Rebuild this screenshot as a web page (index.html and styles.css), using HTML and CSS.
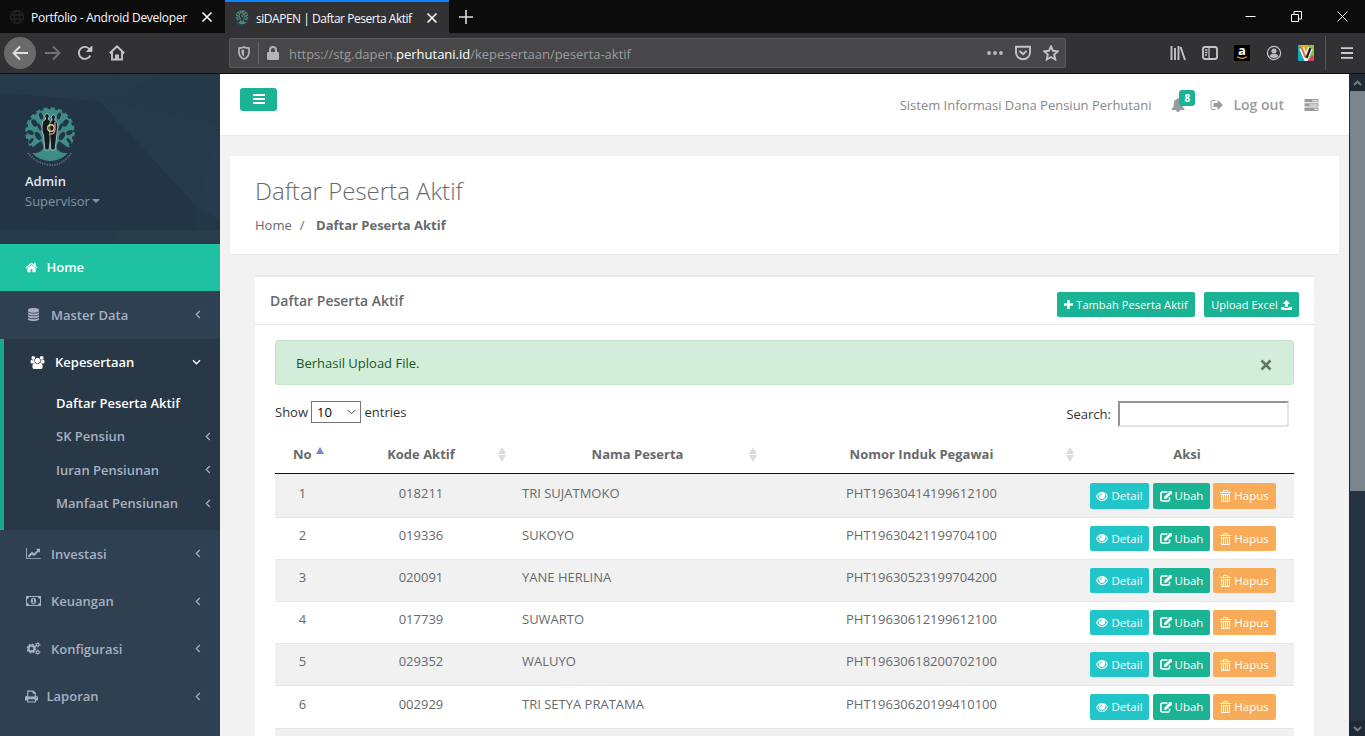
FILE: index.html
```html
<!DOCTYPE html>
<html lang="id">
<head>
<meta charset="utf-8">
<title>siDAPEN | Daftar Peserta Aktif</title>
<link rel="stylesheet" href="styles.css">
</head>
<body>
<svg class="sprite" width="0" height="0">
  <defs>
    <mask id="leaves" maskUnits="userSpaceOnUse" x="0" y="0" width="50" height="60">
      <circle cx="25" cy="25" r="23" fill="#fff"/>
      <circle cx="25" cy="25" r="23.500" fill="none" stroke="#fff" stroke-width="2.500" stroke-dasharray="4.200 3.183"/>
      <g fill="#000">
        <ellipse cx="9.500" cy="16" rx="2.600" ry="4" transform="rotate(-35 9.500 16)"/>
        <ellipse cx="40.500" cy="16" rx="2.600" ry="4" transform="rotate(35 40.500 16)"/>
        <ellipse cx="16" cy="9" rx="1.800" ry="3.500" transform="rotate(-15 16 9)"/>
        <ellipse cx="34" cy="9" rx="1.800" ry="3.500" transform="rotate(15 34 9)"/>
        <ellipse cx="13" cy="29" rx="2.500" ry="4.500" transform="rotate(-30 13 29)"/>
        <ellipse cx="37" cy="29" rx="2.500" ry="4.500" transform="rotate(30 37 29)"/>
        <ellipse cx="5.500" cy="25.500" rx="3.500" ry="2.200" transform="rotate(25 5.500 25.500)"/>
        <ellipse cx="44.500" cy="25.500" rx="3.500" ry="2.200" transform="rotate(-25 44.500 25.500)"/>
        <ellipse cx="14.500" cy="20" rx="1.500" ry="4" transform="rotate(-25 14.500 20)"/>
        <ellipse cx="35.500" cy="20" rx="1.500" ry="4" transform="rotate(25 35.500 20)"/>
        <ellipse cx="6" cy="34" rx="1.500" ry="3.500" transform="rotate(35 6 34)"/>
        <ellipse cx="44" cy="34" rx="1.500" ry="3.500" transform="rotate(-35 44 34)"/>
        <path d="M0 41 8 40 16 34Q20 40 17 44L10 50H0ZM50 41 42 40 34 34Q30 40 33 44L40 50H50Z"/>
      </g>
    </mask>
  </defs>
  <symbol id="home" viewBox="0 0 1792 1792"><path d="M1472 992v480q0 26-19 45t-45 19h-384v-384h-256v384h-384q-26 0-45-19t-19-45v-480q0-1 .5-3t.5-3l575-474 575 474q1 2 1 6zm223-69l-62 74q-8 9-21 11h-3q-13 0-21-7l-692-577-692 577q-12 8-24 7-13-2-21-11l-62-74q-8-10-7-23.5t11-21.5l719-599q32-26 76-26t76 26l244 204v-195q0-14 9-23t23-9h192q14 0 23 9t9 23v408l219 182q10 8 11 21.5t-7 23.5z"/></symbol>
  <symbol id="database" viewBox="0 0 1792 1792"><path d="M896 768q237 0 443-43t325-127v170q0 69-103 128t-280 93.5-385 34.5-385-34.5-280-93.5-103-128v-170q119 84 325 127t443 43zm0 768q237 0 443-43t325-127v170q0 69-103 128t-280 93.5-385 34.5-385-34.5-280-93.5-103-128v-170q119 84 325 127t443 43zm0-384q237 0 443-43t325-127v170q0 69-103 128t-280 93.5-385 34.5-385-34.5-280-93.5-103-128v-170q119 84 325 127t443 43zm0-1152q208 0 385 34.5t280 93.5 103 128v128q0 69-103 128t-280 93.5-385 34.5-385-34.5-280-93.5-103-128v-128q0-69 103-128t280-93.5 385-34.5z"/></symbol>
  <symbol id="users" viewBox="-64 0 1920 1792"><path d="M529 896q-162 5-265 128h-134q-82 0-138-40.5t-56-118.5q0-353 124-353 6 0 43.5 21t97.5 42.5 119 21.5q67 0 133-23-5 37-5 66 0 159 93 281zm1071 637q0 120-73 189.5t-194 69.5h-874q-121 0-194-69.5t-73-189.5q0-53 3.5-103.5t14-109 26.5-108.5 43-97.5 62-81 85.5-53.5 111.5-20q10 0 43 21.5t73 48 107 48 135 21.5 135-21.5 107-48 73-48 43-21.5q61 0 111.5 20t85.5 53.5 62 81 43 97.5 26.5 108.5 14 109 3.5 103.5zm-1024-1277q0 106-75 181t-181 75-181-75-75-181 75-181 181-75 181 75 75 181zm704 384q0 159-112.5 271.5t-271.5 112.5-271.5-112.5-112.5-271.5 112.5-271.5 271.5-112.5 271.5 112.5 112.5 271.5zm576 225q0 78-56 118.5t-138 40.5h-134q-103-123-265-128 93-122 93-281 0-29-5-66 66 23 133 23 59 0 119-21.5t97.5-42.5 43.5-21q124 0 124 353zm-128-609q0 106-75 181t-181 75-181-75-75-181 75-181 181-75 181 75 75 181z"/></symbol>
  <symbol id="chart" viewBox="-128 0 2048 1792"><path d="M1920 1536v128h-2048v-1536h128v1408h1920zm-128-1248v435q0 21-19.5 29.5t-35.5-7.5l-121-121-633 633q-10 10-23 10t-23-10l-233-233-416 416-192-192 585-585q10-10 23-10t23 10l233 233 464-464-121-121q-16-16-7.5-35.5t29.5-19.5h435q14 0 23 9t9 23z"/></symbol>
  <symbol id="money" viewBox="0 0 15 10"><path fill-rule="evenodd" d="M0 0H15V10H0ZM3 1Q3 3 1 3V7Q3 7 3 9H12Q12 7 14 7V3Q12 3 12 1Z"/><path fill-rule="evenodd" d="M7.5 1.8C9.3 1.8 10.2 3.2 10.2 5S9.3 8.2 7.5 8.2 4.8 6.800 4.800 5 5.700 1.800 7.500 1.800ZM6.300 3.700 6.700 4.200 7.100 4V6.300H6.300V7H8.800V6.300H8V3H7.300Z"/></symbol>
  <symbol id="cogs" viewBox="0 0 15 14"><g fill="none" stroke="currentColor"><circle cx="5.300" cy="7" r="3.100" stroke-width="2.200"/><circle cx="5.300" cy="7" r="4.600" stroke-width="1.400" stroke-dasharray="1.800 1.813"/><circle cx="12" cy="3" r="1.500" stroke-width="1.200"/><circle cx="12" cy="3" r="2.400" stroke-width="1" stroke-dasharray="1.200 1.310"/><circle cx="12" cy="11" r="1.500" stroke-width="1.200"/><circle cx="12" cy="11" r="2.400" stroke-width="1" stroke-dasharray="1.200 1.310"/></g></symbol>
  <symbol id="print" viewBox="0 0 12 12"><path fill-rule="evenodd" d="M2 .5H8L10 2.500V5.200Q12 5.300 12 7V9.700H10V11.500H2V9.700H0V7Q0 5.300 2 5.200ZM3 1.500V6H9V3.500H7V1.500ZM3 8.500V10.500H9V8.500ZM10.200 6.500V7.300H11V6.500Z"/></symbol>
  <symbol id="left" viewBox="0 0 6 9"><path d="M4.800 1 1.300 4.500 4.800 8" fill="none" stroke="currentColor" stroke-width="1.200"/></symbol>
  <symbol id="down" viewBox="0 0 9 6"><path d="M1 1.200 4.500 4.700 8 1.200" fill="none" stroke="currentColor" stroke-width="1.400"/></symbol>
  <symbol id="chev" viewBox="0 0 9 6"><path d="M.5 .8 4.500 4.800 8.500 .8" fill="none" stroke="currentColor" stroke-width="1"/></symbol>
  <symbol id="eye" viewBox="0 0 12 10"><path fill-rule="evenodd" d="M6 .5Q10 .5 12 5 10 9.500 6 9.500T0 5Q2 .5 6 .5ZM3.300 2.300Q1.800 3.500 1.200 5 2.800 8.400 6 8.400T10.800 5Q10.200 3.500 8.700 2.300 9.300 3.200 9.300 4.300A3.300 3.200 0 0 1 2.700 4.300Q2.700 3.200 3.300 2.300ZM6 1.900Q4 2 3.900 4.200H4.700Q4.800 2.800 6 2.700Z"/></symbol>
  <symbol id="edit" viewBox="0 0 12 11"><path d="M7.500 1H2.200Q.9 1 .9 2.300V8.700Q.9 10 2.200 10H8.200Q9.500 10 9.500 8.700V6.500" fill="none" stroke="currentColor" stroke-width="1.600"/><path d="M8.500 .2H12V3.400L10.800 3.200 6.300 7.700H4.200V5.700L8.900 1.200Z"/></symbol>
  <symbol id="trash" viewBox="0 0 11 12"><path fill="none" stroke="currentColor" d="M0 2.500H11M3.500 2.500V.5H7.500V2.500M1.500 4.500H9.500M1.500 4V11.500H9.500V4M3.500 4V11M5.500 4V11M7.500 4V11"/></symbol>
  <symbol id="bell" viewBox="0 0 1792 1792"><path d="M912 1696q0-16-16-16-59 0-101.500-42.500t-42.500-101.500q0-16-16-16t-16 16q0 73 51.500 124.500t124.500 51.500q16 0 16-16zm816-288q0 52-38 90t-90 38h-448q0 106-75 181t-181 75-181-75-75-181h-448q-52 0-90-38t-38-90q50-42 91-88t85-119.500 74.500-158.500 50-206 19.500-260q0-152 117-282.500t307-158.500q-8-19-8-39 0-40 28-68t68-28 68 28 28 68q0 20-8 39 190 28 307 158.500t117 282.500q0 139 19.500 260t50 206 74.500 158.500 85 119.500 91 88z"/></symbol>
  <symbol id="signout" viewBox="0 0 1792 1792"><path d="M704 1440q0 4 1 20t.5 26.500-3 23.500-10 19.500-20.500 6.500h-320q-119 0-203.500-84.500t-84.500-203.500v-704q0-119 84.500-203.500t203.500-84.500h320q13 0 22.500 9.500t9.500 22.500q0 4 1 20t.5 26.500-3 23.500-10 19.500-20.500 6.500h-320q-66 0-113 47t-47 113v704q0 66 47 113t113 47h312l11.500 1 11.500 3 8 5.500 7 9 2 13.500zm928-544q0 26-19 45l-544 544q-19 19-45 19t-45-19-19-45v-288h-448q-26 0-45-19t-19-45v-384q0-26 19-45t45-19h448v-288q0-26 19-45t45-19 45 19l544 544q19 19 19 45z"/></symbol>
  <symbol id="tasks" viewBox="0 0 14 12"><path fill-rule="evenodd" d="M0 0H14V3.300H0ZM8 1.200V2.200H13V1.200ZM0 4.300H14V7.600H0ZM5 5.500V6.500H13V5.500ZM0 8.600H14V12H0ZM10 9.800V10.800H13V9.800Z"/></symbol>
  <symbol id="plus" viewBox="0 0 9 9"><path d="M3.300 0H5.700V3.300H9V5.700H5.700V9H3.300V5.700H0V3.300H3.300Z"/></symbol>
  <symbol id="upload" viewBox="0 0 11 10"><path d="M5.500 0 9.200 3.800H7V7H4V3.800H1.800ZM0 7H3.300V8H7.700V7H11V10H0Z"/></symbol>
  <symbol id="x" viewBox="0 0 12 12"><path d="M1.500 1.500 10.500 10.500M10.500 1.500 1.500 10.500" fill="none" stroke="currentColor" stroke-width="1.700"/></symbol>
  <symbol id="emblem" viewBox="0 0 50 60">
    <rect width="50" height="60" fill="#3f8c87" mask="url(#leaves)"/>
    <path d="M19 40H31Q34 47 43 46Q35 54 25 54T7 46Q16 47 19 40Z" fill="#3f8c87"/>
    <g fill="#111b20" stroke="#d3dcda" stroke-width=".7"><path d="M20.500 11A2.200 2.500 0 1 1 23.500 11V12.500Q26 13.500 26 17V27L24 43H20L18.500 28Q16.500 25 17.200 17 17.300 13.500 20.500 12.500Z"/><path d="M27 12A2 2.400 0 1 1 29.800 12V13.500Q33 14.500 32.800 19L31.500 30 30 43H26L24.800 28V17Q24.800 14 27 13.500Z"/></g>
    <g fill="none" stroke-width="1.400"><circle cx="26" cy="21" r="3.300" stroke="#e0cf79"/><path d="M30 15V22Q30 28 24 27" stroke="#c98980"/></g>
    <path d="M3 46Q12 57 25 58T47 45" fill="none" stroke="#62717a" stroke-width="1.700" stroke-dasharray="1.300 1.200"/>
  </symbol>
</svg>

<header class="browser">
  <div class="tabs">
    <div class="tab tab-idle">
      <svg class="i16 globe" viewBox="0 0 16 16"><g fill="none" stroke="#242426" stroke-width="1.300"><circle cx="8" cy="8" r="6.500"/><ellipse cx="8" cy="8" rx="3" ry="6.500"/><path d="M1.500 6H14.500M1.500 10H14.500"/></g></svg>
      <span class="tab-title first">Portfolio - Android Developer</span>
      <svg class="close"><use href="#x"/></svg>
    </div>
    <div class="tab tab-on">
      <svg class="favicon"><use href="#emblem"/></svg>
      <span class="tab-title second">siDAPEN | Daftar Peserta Aktif</span>
      <svg class="close"><use href="#x"/></svg>
    </div>
    <svg class="newtab" viewBox="0 0 14 14"><path d="M7 0V14M0 7H14" stroke="#ddd" stroke-width="1.600"/></svg>
    <div class="window-buttons">
      <svg viewBox="0 0 11 11"><path d="M.5 5.500H10.500" /></svg>
      <svg viewBox="0 0 11 11"><path d="M.5 3.500H7.500V10.500H.5ZM3 3V.5H10.500V8H8"/></svg>
      <svg viewBox="0 0 11 11"><path d="M.5 .5 10.500 10.500M10.500 .5 .5 10.500"/></svg>
    </div>
  </div>
  <div class="toolbar">
    <div class="back"><svg class="i16" viewBox="0 0 16 16"><path d="M16 8H1.500M8 1.500 1.500 8 8 14.500"/></svg></div>
    <svg class="i16 fwd" viewBox="0 0 16 16"><path d="M0 8H14.500M8 1.500 14.500 8 8 14.500"/></svg>
    <svg class="i16 reload" viewBox="0 0 16 16"><path d="M13.300 10.500A6 6 0 1 1 12.500 4"/><path d="M15 1V6.500H9.500Z" fill="#ccc" stroke-width=".8"/></svg>
    <svg class="i16 house" viewBox="0 0 16 16"><path d="M.8 8.300 8 1.300 15.200 8.300M3 7V14.500H13V7M7 14V10.500H9V14" /></svg>
    <div class="urlbar">
      <svg class="shield" viewBox="0 0 12 14"><path d="M1 2.200Q4 1.900 6 .9 8 1.900 11 2.200V6Q11 11 6 13 1 11 1 6Z" fill="none" stroke="#b5b5b7" stroke-width="1.700"/><path d="M6 3.500V10.800Q3.500 9.500 3.500 6.500V4Z" fill="#b5b5b7"/></svg>
      <span class="divider"></span>
      <svg class="lock" viewBox="0 0 12 14"><path d="M3 7V4A3 3 0 0 1 9 4V7" fill="none" stroke="#b5b5b7" stroke-width="2"/><rect y="6" width="12" height="8" rx="1" fill="#b5b5b7"/></svg>
      <span class="url">https://stg.dapen.<b>perhutani.id</b>/kepesertaan/peserta-aktif</span>
      <span class="url-icons">
        <svg class="i16" viewBox="0 0 16 16"><g fill="#bbb" stroke="none"><circle cx="2" cy="8" r="1.900"/><circle cx="8" cy="8" r="1.900"/><circle cx="14" cy="8" r="1.900"/></g></svg>
        <svg class="i16" viewBox="0 0 16 16"><path d="M1 1.700H15V7.500A7 6.700 0 0 1 1 7.500ZM4.500 6 8 9.300 11.500 6"/></svg>
        <svg class="i16" viewBox="0 0 16 16"><path d="M8 1.300 10 5.800 14.900 6.300 11.200 9.600 12.300 14.500 8 12 3.700 14.500 4.800 9.600 1.100 6.300 6 5.800Z"/></svg>
      </span>
    </div>
    <div class="tools">
      <svg class="i16" viewBox="0 0 16 16"><path d="M1.500 1V15M5 3V15M8.500 1V15M10.500 2 15 15"/></svg>
      <svg class="i16" viewBox="0 0 16 16"><rect x="1" y="2" width="14" height="12" rx="2"/><path d="M7 2V14M3 5H5.500M3 7.500H5.500M3 10H5" stroke-width="1.300"/></svg>
      <span class="amazon">a<svg viewBox="0 0 16 16"><path d="M3 11.800Q8 15 13 11.800" stroke="#e99420" stroke-width="1.200" fill="none"/></svg></span>
      <svg class="i16" viewBox="0 0 16 16"><circle cx="8" cy="8" r="6.600" stroke-width="1.200"/><circle cx="8" cy="6" r="2.600" fill="#bbb" stroke="none"/><path d="M3.500 11.500Q4 9 6 9H10Q12 9 12.500 11.500 8 15 3.500 11.500Z" fill="#bbb" stroke="none"/></svg>
      <svg class="i16" viewBox="0 0 16 16"><g stroke="none"><rect width="16" height="16" rx="1" fill="#18a9bd"/><path d="M0 0H16V6H9Z" fill="#f3a61e"/><path d="M10 0H16V12L9 15Z" fill="#8fbf3f"/><path d="M10 16 14 10 16 12V16Z" fill="#df3b78"/></g><path d="M3.500 3 8 13 12.500 3" stroke="#fff" stroke-width="5"/><path d="M3.500 2.500 7.500 12.500" stroke="#ed6b25" stroke-width="2"/><path d="M8.500 13 12.500 3" stroke="#25202b" stroke-width="2.300"/></svg>
    </div>
    <span class="tool-line"></span>
    <svg class="menu" viewBox="0 0 12 12"><path d="M0 1.200H12M0 6H12M0 10.800H12" stroke="#ccc" stroke-width="1.800"/></svg>
  </div>
</header>

<div class="app">
  <nav class="sidebar">
    <div class="profile">
      <svg class="facets" viewBox="0 0 220 171" preserveAspectRatio="none"><rect width="220" height="171" fill="#243746"/><path d="M0 0H120L100 28 0 19Z" fill="#263a49"/><path d="M120 0H220V85L197 134 100 28Z" fill="#273a49"/><path d="M165 0 100 28 220 50V0Z" fill="#263948"/><path d="M220 50V147L197 134Z" fill="#283b4a"/><path d="M0 19 100 28 197 134 195 157H50L0 90Z" fill="#233544"/><path d="M0 90 50 157H0Z" fill="#243645"/><path d="M0 157H220V171H0Z" fill="#263a49"/><path d="M120 157H220V171H110Z" fill="#283c4a"/></svg>
      <svg class="logo"><use href="#emblem"/></svg>
      <strong>Admin</strong>
      <span class="role">Supervisor<i class="caret"></i></span>
    </div>
    <a class="nav home"><svg class="ic13"><use href="#home"/></svg><span>Home</span></a>
    <a class="nav wide"><svg class="ic17"><use href="#database"/></svg><span>Master Data</span><svg class="left"><use href="#left"/></svg></a>
    <div class="group">
      <a class="nav wide"><svg class="ic17"><use href="#users"/></svg><span>Kepesertaan</span><svg class="down"><use href="#down"/></svg></a>
      <div class="sub">
        <a class="on">Daftar Peserta Aktif</a>
        <a>SK Pensiun<svg class="left"><use href="#left"/></svg></a>
        <a>Iuran Pensiunan<svg class="left"><use href="#left"/></svg></a>
        <a>Manfaat Pensiunan<svg class="left"><use href="#left"/></svg></a>
      </div>
    </div>
    <a class="nav wide"><svg class="ic17"><use href="#chart"/></svg><span>Investasi</span><svg class="left"><use href="#left"/></svg></a>
    <a class="nav wide"><svg class="ic17 money"><use href="#money"/></svg><span>Keuangan</span><svg class="left"><use href="#left"/></svg></a>
    <a class="nav wide"><svg class="ic17"><use href="#cogs"/></svg><span>Konfigurasi</span><svg class="left"><use href="#left"/></svg></a>
    <a class="nav narrow"><svg class="ic13"><use href="#print"/></svg><span>Laporan</span><svg class="left"><use href="#left"/></svg></a>
  </nav>

  <main>
    <div class="topbar">
      <button class="burger"><i></i><i></i><i></i></button>
      <div class="topright">
        <span class="welcome">Sistem Informasi Dana Pensiun Perhutani</span>
        <span class="alerts"><svg><use href="#bell"/></svg><b>8</b></span>
        <a class="logout"><svg><use href="#signout"/></svg><span>Log out</span></a>
        <svg class="tasks"><use href="#tasks"/></svg>
      </div>
    </div>
    <section class="heading">
      <h1>Daftar Peserta Aktif</h1>
      <div class="crumbs"><span>Home</span><span class="slash">/</span><b>Daftar Peserta Aktif</b></div>
    </section>
    <section class="box">
      <div class="box-title">
        <h2>Daftar Peserta Aktif</h2>
        <div class="box-tools">
          <a class="btn tambah"><svg class="plus"><use href="#plus"/></svg><span>Tambah Peserta Aktif</span></a>
          <a class="btn upload"><span>Upload Excel</span><svg class="up"><use href="#upload"/></svg></a>
        </div>
      </div>
      <div class="box-body">
        <div class="alert"><span>Berhasil Upload File.</span><svg viewBox="0 0 12 12"><path d="M1.500 1.500 10.500 10.500M10.500 1.500 1.500 10.500" stroke="#647568" stroke-width="2.600"/></svg></div>
        <div class="controls">
          <div class="length">Show<span class="select">10<svg class="chev"><use href="#chev"/></svg></span>entries</div>
          <label class="search">Search:<input type="text"></label>
        </div>
        <div class="table">
          <div class="tr th">
            <span class="no">No<i class="asc"></i></span>
            <span>Kode Aktif<i class="sort"></i></span>
            <span>Nama Peserta<i class="sort"></i></span>
            <span>Nomor Induk Pegawai<i class="sort"></i></span>
            <span>Aksi</span>
          </div>
          <div class="tr odd tall"><span>1</span><span>018211</span><span class="name">TRI SUJATMOKO</span><span>PHT19630414199612100</span><span class="actions"><a class="btn info"><svg><use href="#eye"/></svg>Detail</a><a class="btn ubah"><svg><use href="#edit"/></svg>Ubah</a><a class="btn warn"><svg><use href="#trash"/></svg>Hapus</a></span></div>
          <div class="tr"><span>2</span><span>019336</span><span class="name">SUKOYO</span><span>PHT19630421199704100</span><span class="actions"><a class="btn info"><svg><use href="#eye"/></svg>Detail</a><a class="btn ubah"><svg><use href="#edit"/></svg>Ubah</a><a class="btn warn"><svg><use href="#trash"/></svg>Hapus</a></span></div>
          <div class="tr odd"><span>3</span><span>020091</span><span class="name">YANE HERLINA</span><span>PHT19630523199704200</span><span class="actions"><a class="btn info"><svg><use href="#eye"/></svg>Detail</a><a class="btn ubah"><svg><use href="#edit"/></svg>Ubah</a><a class="btn warn"><svg><use href="#trash"/></svg>Hapus</a></span></div>
          <div class="tr"><span>4</span><span>017739</span><span class="name">SUWARTO</span><span>PHT19630612199612100</span><span class="actions"><a class="btn info"><svg><use href="#eye"/></svg>Detail</a><a class="btn ubah"><svg><use href="#edit"/></svg>Ubah</a><a class="btn warn"><svg><use href="#trash"/></svg>Hapus</a></span></div>
          <div class="tr odd"><span>5</span><span>029352</span><span class="name">WALUYO</span><span>PHT19630618200702100</span><span class="actions"><a class="btn info"><svg><use href="#eye"/></svg>Detail</a><a class="btn ubah"><svg><use href="#edit"/></svg>Ubah</a><a class="btn warn"><svg><use href="#trash"/></svg>Hapus</a></span></div>
          <div class="tr last"><span>6</span><span>002929</span><span class="name">TRI SETYA PRATAMA</span><span>PHT19630620199410100</span><span class="actions"><a class="btn info"><svg><use href="#eye"/></svg>Detail</a><a class="btn ubah"><svg><use href="#edit"/></svg>Ubah</a><a class="btn warn"><svg><use href="#trash"/></svg>Hapus</a></span></div>
          <div class="tr odd"></div>
        </div>
      </div>
    </section>
  </main>

  <div class="scrollbar">
    <span class="arrow"><svg viewBox="0 0 9 6"><path d="M1 5 4.500 1.500 8 5"/></svg></span>
    <span class="thumb"></span>
    <span class="arrow bottom"><svg viewBox="0 0 9 6"><path d="M1 1 4.500 4.500 8 1"/></svg></span>
  </div>
</div>
</body>
</html>
```
FILE: styles.css
```css
* { box-sizing: border-box; }
body { margin: 0; width: 1365px; height: 736px; overflow: hidden; display: flex; flex-direction: column; font: 13px/18px "Open Sans", "Noto Sans", sans-serif; color: #676a6c; background: #2f4050; }
svg { display: block; flex: none; fill: currentColor; }
.sprite { position: absolute; }
.i16 { width: 16px; height: 16px; }

/* Browser frame */
.browser { flex: none; height: 74px; background: #323234; }
.tabs { height: 33px; background: #0c0c0d; display: flex; align-items: center; color: #f9f9fa; font-size: 12px; }
.tab { height: 33px; display: flex; align-items: center; padding-top: 1px; }
.tab-idle { width: 225px; padding-left: 9px; }
.tab-on { width: 224px; padding-left: 10px; background: #323234; border-top: 2px solid #0a84ff; padding-top: 0; }
.tab-title { white-space: nowrap; position: relative; top: 1px; }
.first { width: 157px; margin-left: 6px; letter-spacing: -.26px; }
.second { width: 157px; margin-left: 7px; letter-spacing: -.47px; }
.favicon { width: 14px; height: 16px; }
.close { width: 12px; height: 12px; margin-left: 13px; }
.newtab { width: 14px; height: 14px; margin-left: 10px; }
.window-buttons { margin-left: auto; display: flex; gap: 35px; padding-right: 17px; }
.window-buttons svg { width: 11px; height: 11px; fill: none; stroke: #fff; stroke-width: 1; }
.toolbar { height: 41px; display: flex; align-items: center; padding-left: 4px; border-bottom: 1px solid #0c0c0d; }
.toolbar .i16 { fill: none; stroke: #c4c4c5; stroke-width: 1.9; }
.back { width: 32px; height: 32px; border-radius: 50%; background: #6a6a6b; display: grid; place-items: center; }
.back .i16 { stroke: #e0e0e0; }
.toolbar .fwd { margin-left: 9px; stroke: #737375; }
.reload { margin-left: 16px; }
.house { margin-left: 16px; }
.urlbar { width: 837px; height: 30px; margin-left: 104px; background: #474749; border: 1px solid #5b5b5d; border-radius: 2px; display: flex; align-items: center; padding: 0 6px 0 8px; }
.shield { width: 12px; height: 14px; }
.divider { width: 1px; height: 22px; background: #66686c; margin: 0 8px; }
.lock { width: 12px; height: 14px; }
.url { margin: 2px 0 0 10px; font-size: 13px; color: #9b9b9d; letter-spacing: -.02px; }
.url b { font-weight: 400; color: #fff; }
.url-icons { margin-left: auto; display: flex; gap: 12px; }
.tools { display: flex; gap: 16px; margin-left: 104px; }
.amazon { position: relative; width: 16px; height: 16px; border-radius: 1px; background: #000; color: #fff; font-size: 13px; font-weight: 700; line-height: 11px; text-align: center; }
.amazon svg { position: absolute; inset: 0; width: 16px; height: 16px; }
.tool-line { width: 1px; height: 34px; margin-left: 11px; background: #565658; }
.menu { width: 12px; height: 12px; margin-left: 15px; }

/* Sidebar */
.app { flex: 1; min-height: 0; display: flex; }
.sidebar { width: 220px; flex: none; background: #2f4050; color: #a7b1c2; font-weight: 600; display: flex; flex-direction: column; overflow: hidden; }
.profile { flex: none; height: 170px; padding: 33px 25px 0; position: relative; display: flex; flex-direction: column; }
.facets { position: absolute; inset: 0; width: 220px; height: 170px; }
.logo { position: relative; width: 50px; height: 60px; }
.profile strong { position: relative; margin-top: 5px; color: #dfe4ed; font-weight: 600; }
.role { position: relative; margin-top: 2px; font-weight: 400; color: #8095a8; display: flex; align-items: center; }
.caret { border: 4px solid transparent; border-top-color: #8095a8; border-bottom: 0; margin-left: 2px; }
.nav { flex: none; height: 47.500px; display: flex; align-items: center; padding: 0 19px 0 25px; }
.nav span { margin-left: 9px; }
.home { height: 47px; padding-bottom: 1px; background: #1ec2a0; color: #fff; }
.home span, .narrow span { margin-left: 8.500px; }
.ic13 { width: 13px; height: 13px; }
.ic17 { width: 17px; height: 13px; }
.money { height: 10px; }
.left { width: 6px; height: 9px; margin-left: auto; }
.down { width: 9px; height: 6px; margin-left: auto; }
.group { flex: none; height: 191px; background: #293846; border-left: 4px solid #19aa8d; color: #fff; }
.group + .nav { height: 48px; }
.sub { display: flex; flex-direction: column; color: #a7b1c2; }
.sub a { height: 33.500px; display: flex; align-items: center; padding: 0 9px 0 52px; }
.sub .on { color: #fff; }

/* Page */
main { width: 1129px; flex: none; background: #f2f2f2; overflow: hidden; }
.topbar { height: 62px; background: #fff; border-bottom: 1px solid #e7eaec; display: flex; justify-content: space-between; padding: 14px 30px 0 20px; }
.burger { width: 37px; height: 23px; border: 0; padding: 0 0 1px; border-radius: 3px; background: #1ab394; display: flex; flex-direction: column; align-items: center; justify-content: center; gap: 2px; }
.burger i { width: 12px; height: 2px; background: #fff; }
.topright { height: 34px; display: flex; align-items: center; color: #999c9e; }
.welcome { color: #888; }
.alerts { position: relative; margin-left: 20px; }
.alerts svg { width: 14px; height: 14px; }
.alerts b { position: absolute; left: 8px; top: -8px; width: 16px; height: 16px; border-radius: 3px; background: #1ab394; color: #fff; font-size: 10px; line-height: 16px; text-align: center; }
.logout { display: flex; align-items: center; margin-left: 25px; font-size: 14px; font-weight: 600; }
.logout svg { width: 14px; height: 14px; }
.logout span { margin-left: 9px; }
.tasks { width: 15px; height: 12px; margin-left: 20px; }
.heading { height: 99px; margin: 20px 10px 0; padding: 20px 25px 0; background: #fff; border-bottom: 1px solid #e7eaec; }
h1 { margin: 0; font-size: 24px; line-height: 30px; font-weight: 300; }
.crumbs { display: flex; margin-top: 10px; }
.slash { margin: 0 11.500px 0 8px; }
.box { margin: 20px 35px 0; background: #fff; border-top: 2px solid #e7eaec; height: 500px; }
.box-title { height: 48px; display: flex; justify-content: space-between; padding: 15px 15px 0; border-bottom: 1px solid #e7eaec; }
h2 { margin: 0; font-size: 14px; line-height: 18px; font-weight: 600; }
.box-tools { display: flex; gap: 9px; }
.btn { height: 25px; border-radius: 2px; background: #1ab394; color: #fff; font-size: 11px; display: flex; align-items: center; justify-content: center; white-space: nowrap; }
.tambah { width: 138px; gap: 3px; letter-spacing: .1px; }
.upload { width: 95px; gap: 3px; letter-spacing: .05px; }
.plus { width: 9px; height: 9px; }
.up { width: 11px; height: 10px; }
.box-body { padding: 15px 20px 0; }
.alert { height: 45px; border: 1px solid #c3e6cb; border-radius: 3px; background: #d4edda; color: #155724; display: flex; align-items: center; justify-content: space-between; padding: 1px 21px 0 20px; }
.alert svg { width: 12px; height: 12px; margin-top: 4px; }
.controls { height: 50px; padding-top: 16px; display: flex; justify-content: space-between; color: #333; }
.length { display: flex; align-items: center; height: 22px; }
.select { width: 50px; height: 22px; border: 1px solid #767676; margin: 0 3.500px 0 3px; padding: 0 4px 0 5px; color: #000; display: flex; align-items: center; justify-content: space-between; }
.chev { width: 9px; height: 6px; color: #444; }
.search { display: flex; align-items: center; height: 26px; padding-right: 5px; }
.search input { width: 171px; height: 26px; margin-left: 7px; border: 2px solid; border-color: #949494 #e3e3e3 #e3e3e3 #949494; background: #fff; }
.tr { display: grid; grid-template-columns: 55px 182px 251px 317px 214px; height: 42px; border-bottom: 1px solid #e7e7e7; text-align: center; padding-top: 8px; }
.tr > span { min-width: 0; }
.th { height: 39px; border-color: #111; padding-top: 10px; font-weight: 700; }
.th > span { position: relative; }
.th .no { padding: 0 0 0 18px; display: flex; }
.asc { border: 4px solid transparent; border-top: 0; border-bottom: 7px solid #7b83dc; height: 0; margin: 2px 0 0 4px; }
.sort::before, .sort::after { content: ""; position: absolute; right: 6px; border: 4px solid transparent; }
.sort::before { top: 2px; border-top: 0; border-bottom: 7px solid #dcdcdc; }
.sort::after { top: 10px; border-bottom: 0; border-top: 7px solid #dcdcdc; }
.odd { background: #f1f1f1; }
.tall { height: 44px; padding-top: 10px; }
.last { height: 43px; padding-top: 9px; }
.tr .name { text-align: left; padding-left: 10px; }
.actions { display: flex; padding-left: 10px; }
.actions .btn { gap: 3px; font-size: 11.500px; }
.actions svg { width: 12px; height: 11px; }
.info { width: 59px; background: #23c6c8; }
.ubah { width: 57px; margin-left: 4px; }
.warn { width: 63px; margin-left: 3px; background: #f8ac59; }
.actions .warn svg { width: 11px; height: 12px; }
.tall .actions { margin-top: -1px; }
.tall .btn, .last .btn { height: 26px; }
.last .actions { margin-top: -1px; }

/* Scrollbar */
.scrollbar { width: 16px; flex: none; background: #263340; border-left: 1px solid #1f2c39; display: flex; flex-direction: column; }
.arrow { height: 17px; display: grid; place-items: center; background: #1f2a35; }
.arrow svg { width: 9px; height: 6px; fill: none; stroke: #7a8188; stroke-width: 1.800; }
.thumb { height: 400px; background: #7c848c; }
.bottom { height: 15px; margin-top: auto; }
```
